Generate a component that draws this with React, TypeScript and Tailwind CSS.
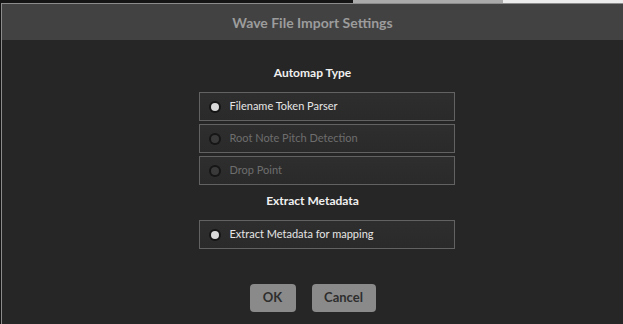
import React from "react";

function Option({ label, active }: { label: string; active: boolean }) {
  return (
    <div className="flex h-[29px] w-[256px] items-center border border-[#626262] bg-gradient-to-b from-[#2e2e2e] to-[#2a2a2a] pl-[9px]">
      <div
        className={
          "flex h-[12px] w-[12px] items-center justify-center rounded-full " +
          (active ? "bg-[#151515]" : "bg-[#161616]")
        }
      >
        <div
          className={
            "h-[8px] w-[8px] rounded-full " + (active ? "bg-[#d8d8d8]" : "bg-[#3a3a3a]")
          }
        />
      </div>
      <span
        className={
          "ml-[9px] text-[11px] " + (active ? "text-[#e6e6e6]" : "text-[#6e6e6e]")
        }
      >
        {label}
      </span>
    </div>
  );
}

export default function App() {
  return (
    <div
      className="flex h-[324px] w-[623px] flex-col overflow-hidden bg-[#141414]"
      style={{ fontFamily: "Lato, 'Open Sans', sans-serif" }}
    >
      <div className="flex h-[3px] shrink-0">
        <div className="w-[353px] bg-[#151515]" />
        <div className="w-[150px] bg-[#ababab]" />
        <div className="flex-1 bg-[#ececec]" />
      </div>
      <div className="ml-[1px] flex flex-1 flex-col border-l border-t border-[#8c8c8c] bg-[#262626]">
        <div className="flex h-[36px] shrink-0 items-center justify-center bg-[#424242]">
          <span className="text-[14px] font-bold text-[#9c9c9c]">Wave File Import Settings</span>
        </div>
        <div className="flex flex-1 flex-col items-center pt-[24px]">
          <div className="mb-[10px] h-[18px] text-[12px] font-bold leading-[18px] text-[#f0f0f0]">
            Automap Type
          </div>
          <div className="ml-[28px] flex flex-col gap-[3px]">
            <Option label="Filename Token Parser" active />
            <Option label="Root Note Pitch Detection" active={false} />
            <Option label="Drop Point" active={false} />
          </div>
          <div className="mt-[7px] mb-[10px] h-[18px] text-[12px] font-bold leading-[18px] text-[#f0f0f0]">
            Extract Metadata
          </div>
          <div className="ml-[28px]">
            <Option label="Extract Metadata for mapping" active />
          </div>
          <div className="mt-[35px] flex gap-[16px]">
            <button className="h-[28px] w-[46px] rounded-[4px] bg-[#8a8a8a] text-[13px] font-bold text-[#2e2e2e]">
              OK
            </button>
            <button className="h-[28px] w-[64px] rounded-[4px] bg-[#8a8a8a] text-[13px] font-bold text-[#2e2e2e]">
              Cancel
            </button>
          </div>
        </div>
      </div>
    </div>
  );
}
